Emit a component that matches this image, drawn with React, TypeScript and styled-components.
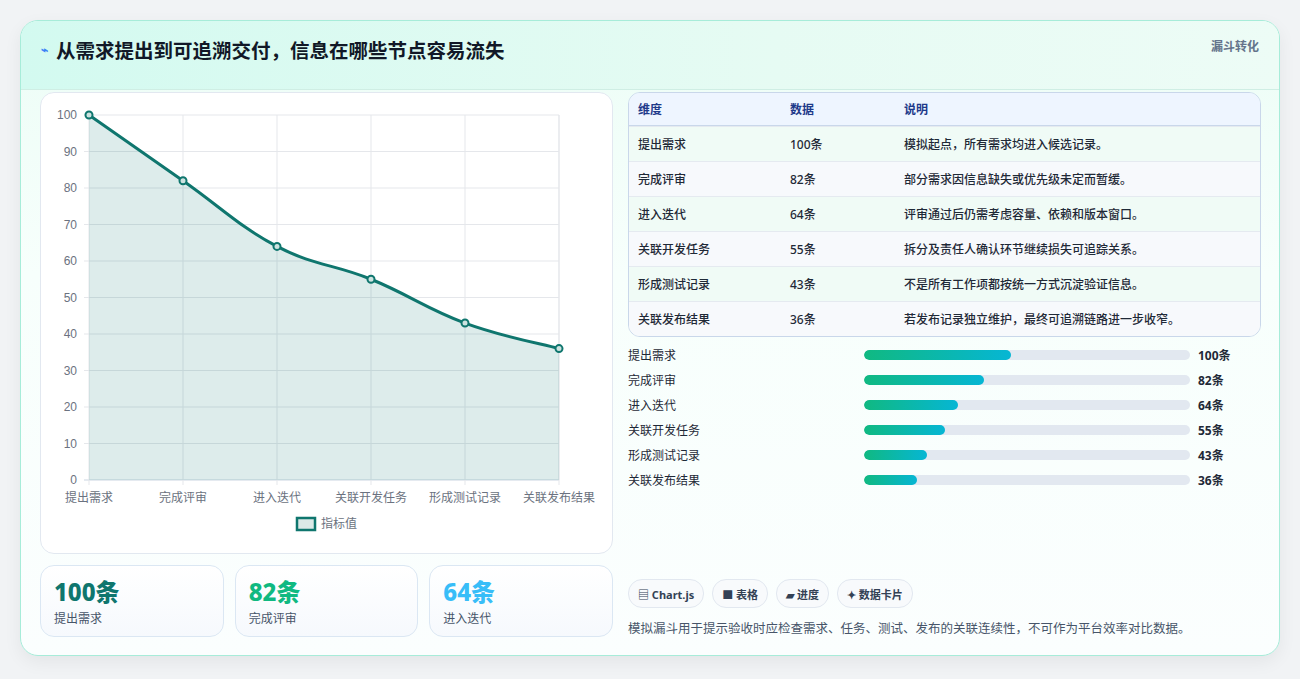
import React from "react";
import styled, { createGlobalStyle } from "styled-components";

const G = createGlobalStyle`
  body { margin:0; background:#f1f3f5; font-family:"Noto Sans","Noto Sans CJK SC",sans-serif; }
`;
const Page = styled.div`padding:20px 20px 22px 20px; background:#f1f3f5;`;
const Card = styled.div`
  background:linear-gradient(180deg,#ecfdf6 0%,#f7fffc 40%,#fbfefe 100%);
  border:1px solid #a7ecd9; border-radius:18px; box-shadow:0 6px 18px rgba(0,0,0,0.06); overflow:hidden;
`;
const Header = styled.div`
  height:69px; display:flex; align-items:flex-start; justify-content:space-between; padding:14px 20px 0; box-sizing:border-box;
  background:linear-gradient(90deg,#d3faf0,#e6fbf3 60%,#edfcf6); border-bottom:1px solid #cfeee4;
`;
const Title = styled.h1`margin:0; font-size:19.5px; font-weight:700; color:#111827; display:flex; align-items:center; gap:8px;`;
const Bolt = styled.span`color:#3b82f6; font-size:12px;`;
const Tag = styled.span`font-size:12px; font-weight:700; color:#64748b; margin-top:2px;`;
const Body = styled.div`display:grid; grid-template-columns:573px 633px; gap:15px; padding:2px 19px 18px 19px;`;
const Col = styled.div`display:flex; flex-direction:column;`;
const ChartBox = styled.div`height:460px; background:#fff; border:1px solid #e2e8f0; border-radius:14px;`;
const Stats = styled.div`display:grid; grid-template-columns:repeat(3,1fr); gap:11px; margin-top:11px;`;
const Stat = styled.div`height:72px; border:1px solid #dbe7f3; border-radius:14px; background:linear-gradient(180deg,#fff,#f6f9fd); padding:10px 13px; box-sizing:border-box;`;
const Big = styled.div<{c:string}>`font-size:24px; font-weight:800; color:${p=>p.c}; line-height:32px;`;
const Small = styled.div`font-size:12px; color:#475569; margin-top:1px;`;
const Table = styled.table`width:100%; border-collapse:separate; border-spacing:0; border:1px solid #c9d7ea; border-radius:12px; overflow:hidden; font-size:12px;`;
const Th = styled.th`background:#eef5ff; color:#1e3a8a; text-align:left; font-weight:700; height:32px; padding:0 9px; border-bottom:1px solid #c9d7ea;`;
const Td = styled.td<{alt:boolean}>`height:34px; padding:0 9px; color:#1f2937; font-weight:500; background:${p=>p.alt?"#f7f9fc":"#f0fbf6"}; border-top:1px solid #e5eaf0;`;
const Bars = styled.div`display:flex; flex-direction:column; gap:7px; margin-top:9px;`;
const BarRow = styled.div`display:grid; grid-template-columns:236px 326px 60px; align-items:center; height:18px; font-size:12px; color:#1f2937;`;
const Track = styled.div`height:10px; border-radius:5px; background:#e2e8f0; overflow:hidden;`;
const Fill = styled.div`height:100%; border-radius:5px; background:linear-gradient(90deg,#10b981,#06b6d4);`;
const Val = styled.span`font-weight:700; padding-left:8px;`;
const Chips = styled.div`display:flex; gap:8px; margin-top:90px;`;
const Chip = styled.span`font-size:11px; font-weight:700; color:#334155; border:1px solid #e2e8f0; border-radius:14px; padding:0 9px; height:27px; display:flex; align-items:center; gap:4px; background:#f8fafc;`;
const Note = styled.div`font-size:12.5px; color:#475569; margin-top:10px;`;

const labels=["提出需求","完成评审","进入迭代","关联开发任务","形成测试记录","关联发布结果"];
const vals=[100,82,64,55,43,36];
const descs=["模拟起点，所有需求均进入候选记录。","部分需求因信息缺失或优先级未定而暂缓。","评审通过后仍需考虑容量、依赖和版本窗口。","拆分及责任人确认环节继续损失可追踪关系。","不是所有工作项都按统一方式沉淀验证信息。","若发布记录独立维护，最终可追溯链路进一步收窄。"];

function Chart(){
  const x0=48,x1=518,y0=22,y1=387;
  const xs=vals.map((_,i)=>x0+i*(x1-x0)/5);
  const ys=vals.map(v=>y1-(v/100)*(y1-y0));
  const t=0.2;
  let d=`M${xs[0]},${ys[0]}`;
  for(let i=1;i<6;i++){
    const p0=Math.max(i-2,0),p3=Math.min(i+1,5);
    const c1x=xs[i-1]+(xs[i]-xs[p0])*t, c1y=ys[i-1]+(ys[i]-ys[p0])*t;
    const c2x=xs[i]-(xs[p3]-xs[i-1])*t, c2y=ys[i]-(ys[p3]-ys[i-1])*t;
    d+=` C${c1x},${c1y} ${c2x},${c2y} ${xs[i]},${ys[i]}`;
  }
  return <svg width="571" height="458" style={{display:"block"}} fontFamily="Liberation Sans, Noto Sans CJK SC, sans-serif">
    {Array.from({length:11},(_,i)=>{const y=y1-i*(y1-y0)/10;return <g key={i}><line x1={x0-5} x2={x1} y1={y} y2={y} stroke={i===0?"#cbd5e1":"#e5e7eb"}/><text x={x0-12} y={y+4} fontSize="12" fill="#6b7280" textAnchor="end">{i*10}</text></g>})}
    {xs.map((x,i)=><line key={i} x1={x} x2={x} y1={y0} y2={y1+5} stroke="#e5e7eb"/>)}
    <line x1={x1} x2={x1} y1={y0} y2={y1} stroke="#e5e7eb"/>
    <path d={d+` L${x1},${y1} L${x0},${y1} Z`} fill="rgba(15,118,110,0.14)"/>
    <path d={d} fill="none" stroke="#0f766e" strokeWidth="3"/>
    {xs.map((x,i)=><circle key={i} cx={x} cy={ys[i]} r="3.5" fill="#cde3e0" stroke="#0f766e" strokeWidth="2"/>)}
    {xs.map((x,i)=><text key={i} x={x} y={y1+22} fontSize="12" fill="#6b7280" textAnchor="middle">{labels[i]}</text>)}
    <rect x="256" y="425" width="18" height="12" fill="#dbe9e7" stroke="#0f766e" strokeWidth="2.5"/>
    <text x="280" y="435" fontSize="12" fill="#6b7280">指标值</text>
  </svg>;
}

export default function App(){
  return <Page><G/><Card>
    <Header><Title><Bolt>⌁</Bolt>从需求提出到可追溯交付，信息在哪些节点容易流失</Title><Tag>漏斗转化</Tag></Header>
    <Body>
      <Col>
        <ChartBox><Chart/></ChartBox>
        <Stats>
          <Stat><Big c="#0f766e">100条</Big><Small>提出需求</Small></Stat>
          <Stat><Big c="#10b981">82条</Big><Small>完成评审</Small></Stat>
          <Stat><Big c="#38bdf8">64条</Big><Small>进入迭代</Small></Stat>
        </Stats>
      </Col>
      <Col>
        <Table><thead><tr><Th style={{width:134}}>维度</Th><Th style={{width:96}}>数据</Th><Th>说明</Th></tr></thead>
          <tbody>{labels.map((l,i)=><tr key={l}><Td alt={i%2===1}>{l}</Td><Td alt={i%2===1}>{vals[i]}条</Td><Td alt={i%2===1}>{descs[i]}</Td></tr>)}</tbody>
        </Table>
        <Bars>{labels.map((l,i)=><BarRow key={l}><span>{l}</span><Track><Fill style={{width:`${vals[i]*0.45}%`}}/></Track><Val>{vals[i]}条</Val></BarRow>)}</Bars>
        <Chips><Chip>▤ Chart.js</Chip><Chip>■ 表格</Chip><Chip>▰ 进度</Chip><Chip>✦ 数据卡片</Chip></Chips>
        <Note>模拟漏斗用于提示验收时应检查需求、任务、测试、发布的关联连续性，不可作为平台效率对比数据。</Note>
      </Col>
    </Body>
  </Card></Page>;
}
